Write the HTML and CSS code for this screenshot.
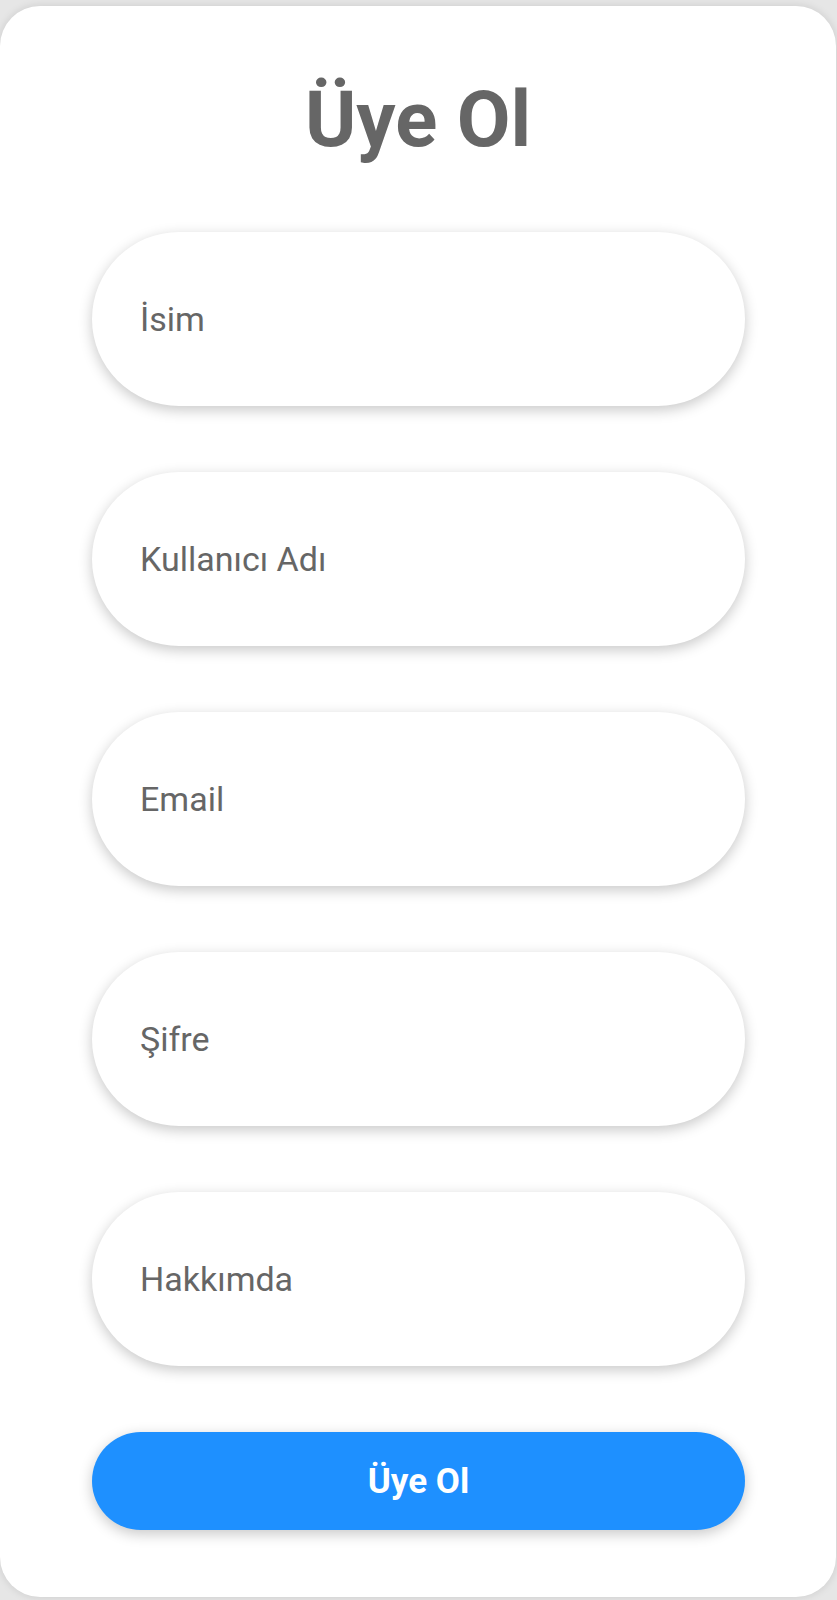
FILE: index.html
```html
<!DOCTYPE html>
<html lang="tr">
<head>
<meta charset="utf-8">
<title>Üye Ol</title>
<link rel="stylesheet" href="styles.css">
</head>
<body>
<main class="card">
  <h1 class="title">Üye Ol</h1>
  <form class="form">
    <div class="field"><span class="field-text">İsim</span></div>
    <div class="field"><span class="field-text">Kullanıcı Adı</span></div>
    <div class="field"><span class="field-text">Email</span></div>
    <div class="field"><span class="field-text">Şifre</span></div>
    <div class="field"><span class="field-text">Hakkımda</span></div>
    <button type="button" class="submit">Üye Ol</button>
  </form>
</main>
</body>
</html>
```

FILE: styles.css
```css
* { box-sizing: border-box; }
html, body { margin: 0; padding: 0; }
body {
  background: #e6e6e6;
  padding-top: 6px;
  font-family: Roboto, "Liberation Sans", Arial, sans-serif;
  height: 1600px;
  overflow: hidden;
}
.card {
  background: #ffffff;
  border-radius: 40px;
  height: 1591px;
  margin-right: 1px;
  padding-top: 75px;
  box-shadow: 0 0 8px rgba(0,0,0,0.12);
}
.title {
  margin: 0;
  text-align: center;
  font-size: 78px;
  line-height: 78px;
  font-weight: 700;
  color: #666666;
}
.form {
  display: flex;
  flex-direction: column;
  gap: 66px;
  padding: 0 91px 0 92px;
  margin-top: 73px;
}
.field {
  height: 174px;
  border-radius: 87px;
  background: #ffffff;
  box-shadow: 0 4px 14px rgba(0,0,0,0.22);
  display: flex;
  align-items: center;
  padding-left: 48px;
}
.field-text {
  font-size: 34px;
  color: #666666;
}
.submit {
  height: 98px;
  border: none;
  border-radius: 49px;
  background: #1e90ff;
  color: #ffffff;
  font-family: Roboto, "Liberation Sans", Arial, sans-serif;
  font-size: 35px;
  font-weight: 700;
  box-shadow: 0 4px 14px rgba(0,0,0,0.22);
  padding: 0;
}
```
